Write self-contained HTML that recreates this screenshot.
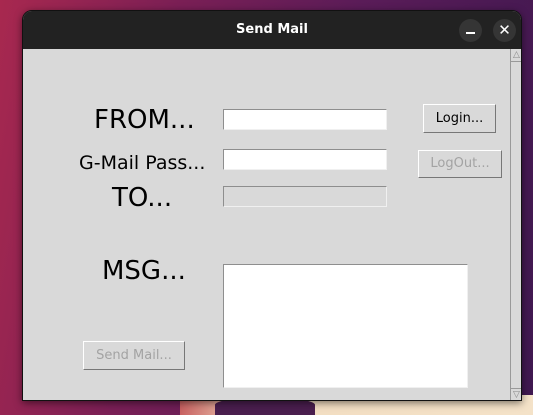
<!DOCTYPE html>
<html><head><style>
*{margin:0;padding:0;box-sizing:border-box}
body{width:533px;height:415px;overflow:hidden;position:relative;font-family:"DejaVu Sans","Liberation Sans",sans-serif;
background:linear-gradient(100deg,#a8284f 0%,#7a1f55 30%,#5a1c58 60%,#3f1850 100%);}
.deco{position:absolute;left:180px;top:395px;width:353px;height:20px;background:linear-gradient(90deg,#c86060,#f2dcc0 20%,#f4e2c8 100%)}
.fl{position:absolute;left:215px;top:398px;width:100px;height:17px;background:#4a1e4e;border-radius:40% 40% 0 0}
.win{position:absolute;left:22px;top:10px;width:500px;height:391px;background:#d9d9d9;border-radius:10px 10px 0 0;overflow:hidden;box-shadow:0 2px 8px rgba(0,0,0,.5);border:1px solid #111}
.tb{position:absolute;left:0;top:0;width:100%;height:38px;background:#222222;color:#fff;font-family:"DejaVu Sans",sans-serif;font-weight:bold;font-size:13px;text-align:center;line-height:38px}
.cb{position:absolute;top:8px;width:23px;height:23px;border-radius:50%;background:#353535}
.lbl{position:absolute;color:#000;white-space:nowrap;line-height:1}
.ent{position:absolute;background:#fff;border:1px solid #8e8e8e;border-right-color:#f0f0f0;border-bottom-color:#f0f0f0}
.btn{position:absolute;border:1px solid #fff;border-right-color:#777;border-bottom-color:#777;background:#d9d9d9;font-size:13px;text-align:center;color:#000}
.dis{color:#a3a3a3}
.sb{position:absolute;left:487px;top:38px;width:12px;height:352px;background:#d9d9d9;border-left:1px solid #999}
</style></head><body>
<div class="deco"></div><div class="fl"></div>
<div class="win">
 <div class="tb">Send Mail</div>
 <div class="cb" style="left:436px"><div style="position:absolute;left:7px;top:13px;width:9px;height:2px;background:#fff"></div></div>
 <div class="cb" style="left:470px;color:#fff;font-size:15px;line-height:23px;text-align:center;font-weight:normal">✕</div>
 <div class="lbl" style="left:71px;top:96px;font-size:26px">FROM...</div>
 <div class="lbl" style="left:56px;top:143px;font-size:19px">G-Mail Pass...</div>
 <div class="lbl" style="left:89px;top:174px;font-size:26px">TO...</div>
 <div class="lbl" style="left:79px;top:247px;font-size:26px">MSG...</div>
 <div class="ent" style="left:200px;top:98px;width:164px;height:21px"></div>
 <div class="ent" style="left:200px;top:138px;width:164px;height:21px"></div>
 <div class="ent" style="left:200px;top:175px;width:164px;height:21px;background:#d9d9d9"></div>
 <div class="ent" style="left:200px;top:253px;width:245px;height:124px"></div>
 <div class="btn" style="left:400px;top:93px;width:73px;height:29px;line-height:27px">Login...</div>
 <div class="btn dis" style="left:395px;top:139px;width:84px;height:28px;line-height:26px">LogOut...</div>
 <div class="btn dis" style="left:60px;top:330px;width:102px;height:29px;line-height:27px">Send Mail...</div>
 <div class="sb">
  <div style="position:absolute;left:0;top:0;width:11px;height:13px;border-bottom:1px solid #999;color:#888;font-size:9px;line-height:13px;text-align:center">△</div>
  <div style="position:absolute;left:0;bottom:0;width:11px;height:13px;border-top:1px solid #999;color:#888;font-size:9px;line-height:13px;text-align:center">▽</div>
 </div>
</div>
</body></html>
